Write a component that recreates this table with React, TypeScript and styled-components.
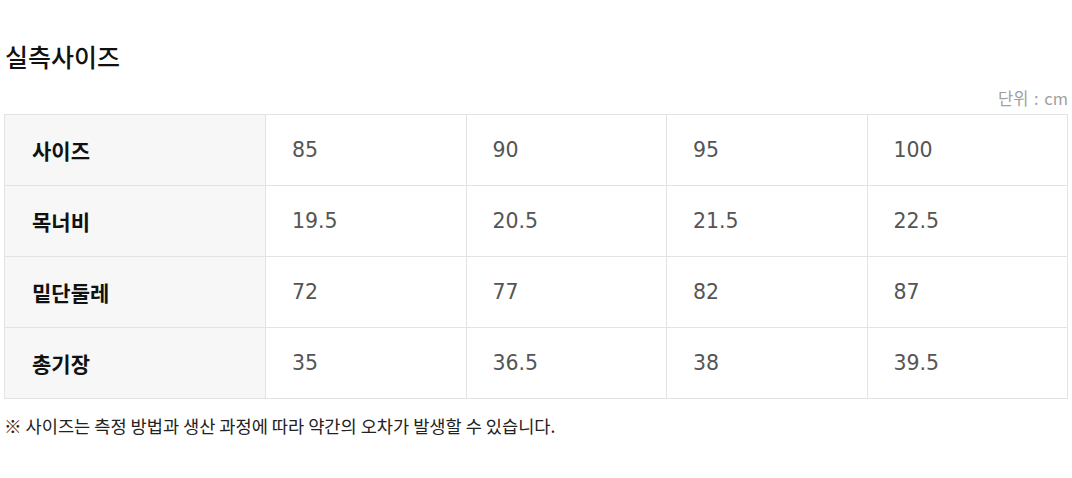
import React from 'react'
import styled, { createGlobalStyle } from 'styled-components'

const line = '#e3e3e3'

const GlobalStyle = createGlobalStyle`
  body {
    margin: 0;
    background: #fff;
    font-family: "DejaVu Sans", "Noto Sans CJK KR", sans-serif;
  }
`

const Page = styled.div`
  padding: 38px 4px 0 4px;
  display: flex;
  flex-direction: column;
`

const Title = styled.h2`
  margin: 0;
  font-family: "Noto Sans CJK KR", sans-serif;
  font-size: 25px;
  font-weight: 500;
  line-height: 36px;
  color: #111;
  padding-left: 1px;
`

const Unit = styled.div`
  margin-top: 12px;
  text-align: right;
  font-family: "Noto Sans CJK KR", sans-serif;
  font-size: 16.5px;
  line-height: 24px;
  word-spacing: 2px;
  color: #a0a0a0;
`

const Table = styled.table`
  margin-top: 4px;
  width: 100%;
  border-collapse: collapse;
  table-layout: fixed;
  border: 1px solid ${line};
`

const Head = styled.th`
  box-sizing: border-box;
  width: 261px;
  height: 70px;
  background: #f7f7f7;
  border: 1px solid ${line};
  text-align: left;
  padding: 0 0 0 27px;
  font-family: "Noto Sans CJK KR", sans-serif;
  font-size: 21px;
  font-weight: 700;
  color: #111;
`

const Cell = styled.td`
  height: 70px;
  border: 1px solid ${line};
  padding: 0 0 0 26px;
  font-size: 20.5px;
  color: #555;
`

const Note = styled.p`
  margin: 14px 0 0 0;
  font-family: "Noto Sans CJK KR", sans-serif;
  font-size: 17.6px;
  color: #222;
`

const rows: [string, string[]][] = [
  ['사이즈', ['85', '90', '95', '100']],
  ['목너비', ['19.5', '20.5', '21.5', '22.5']],
  ['밑단둘레', ['72', '77', '82', '87']],
  ['총기장', ['35', '36.5', '38', '39.5']],
]

export default function App() {
  return (
    <>
      <GlobalStyle />
      <Page>
        <Title>실측사이즈</Title>
        <Unit>단위 : cm</Unit>
        <Table>
          <tbody>
            {rows.map(([label, values]) => (
              <tr key={label}>
                <Head>{label}</Head>
                {values.map((v, i) => (
                  <Cell key={i}>{v}</Cell>
                ))}
              </tr>
            ))}
          </tbody>
        </Table>
        <Note>※ 사이즈는 측정 방법과 생산 과정에 따라 약간의 오차가 발생할 수 있습니다.</Note>
      </Page>
    </>
  )
}
